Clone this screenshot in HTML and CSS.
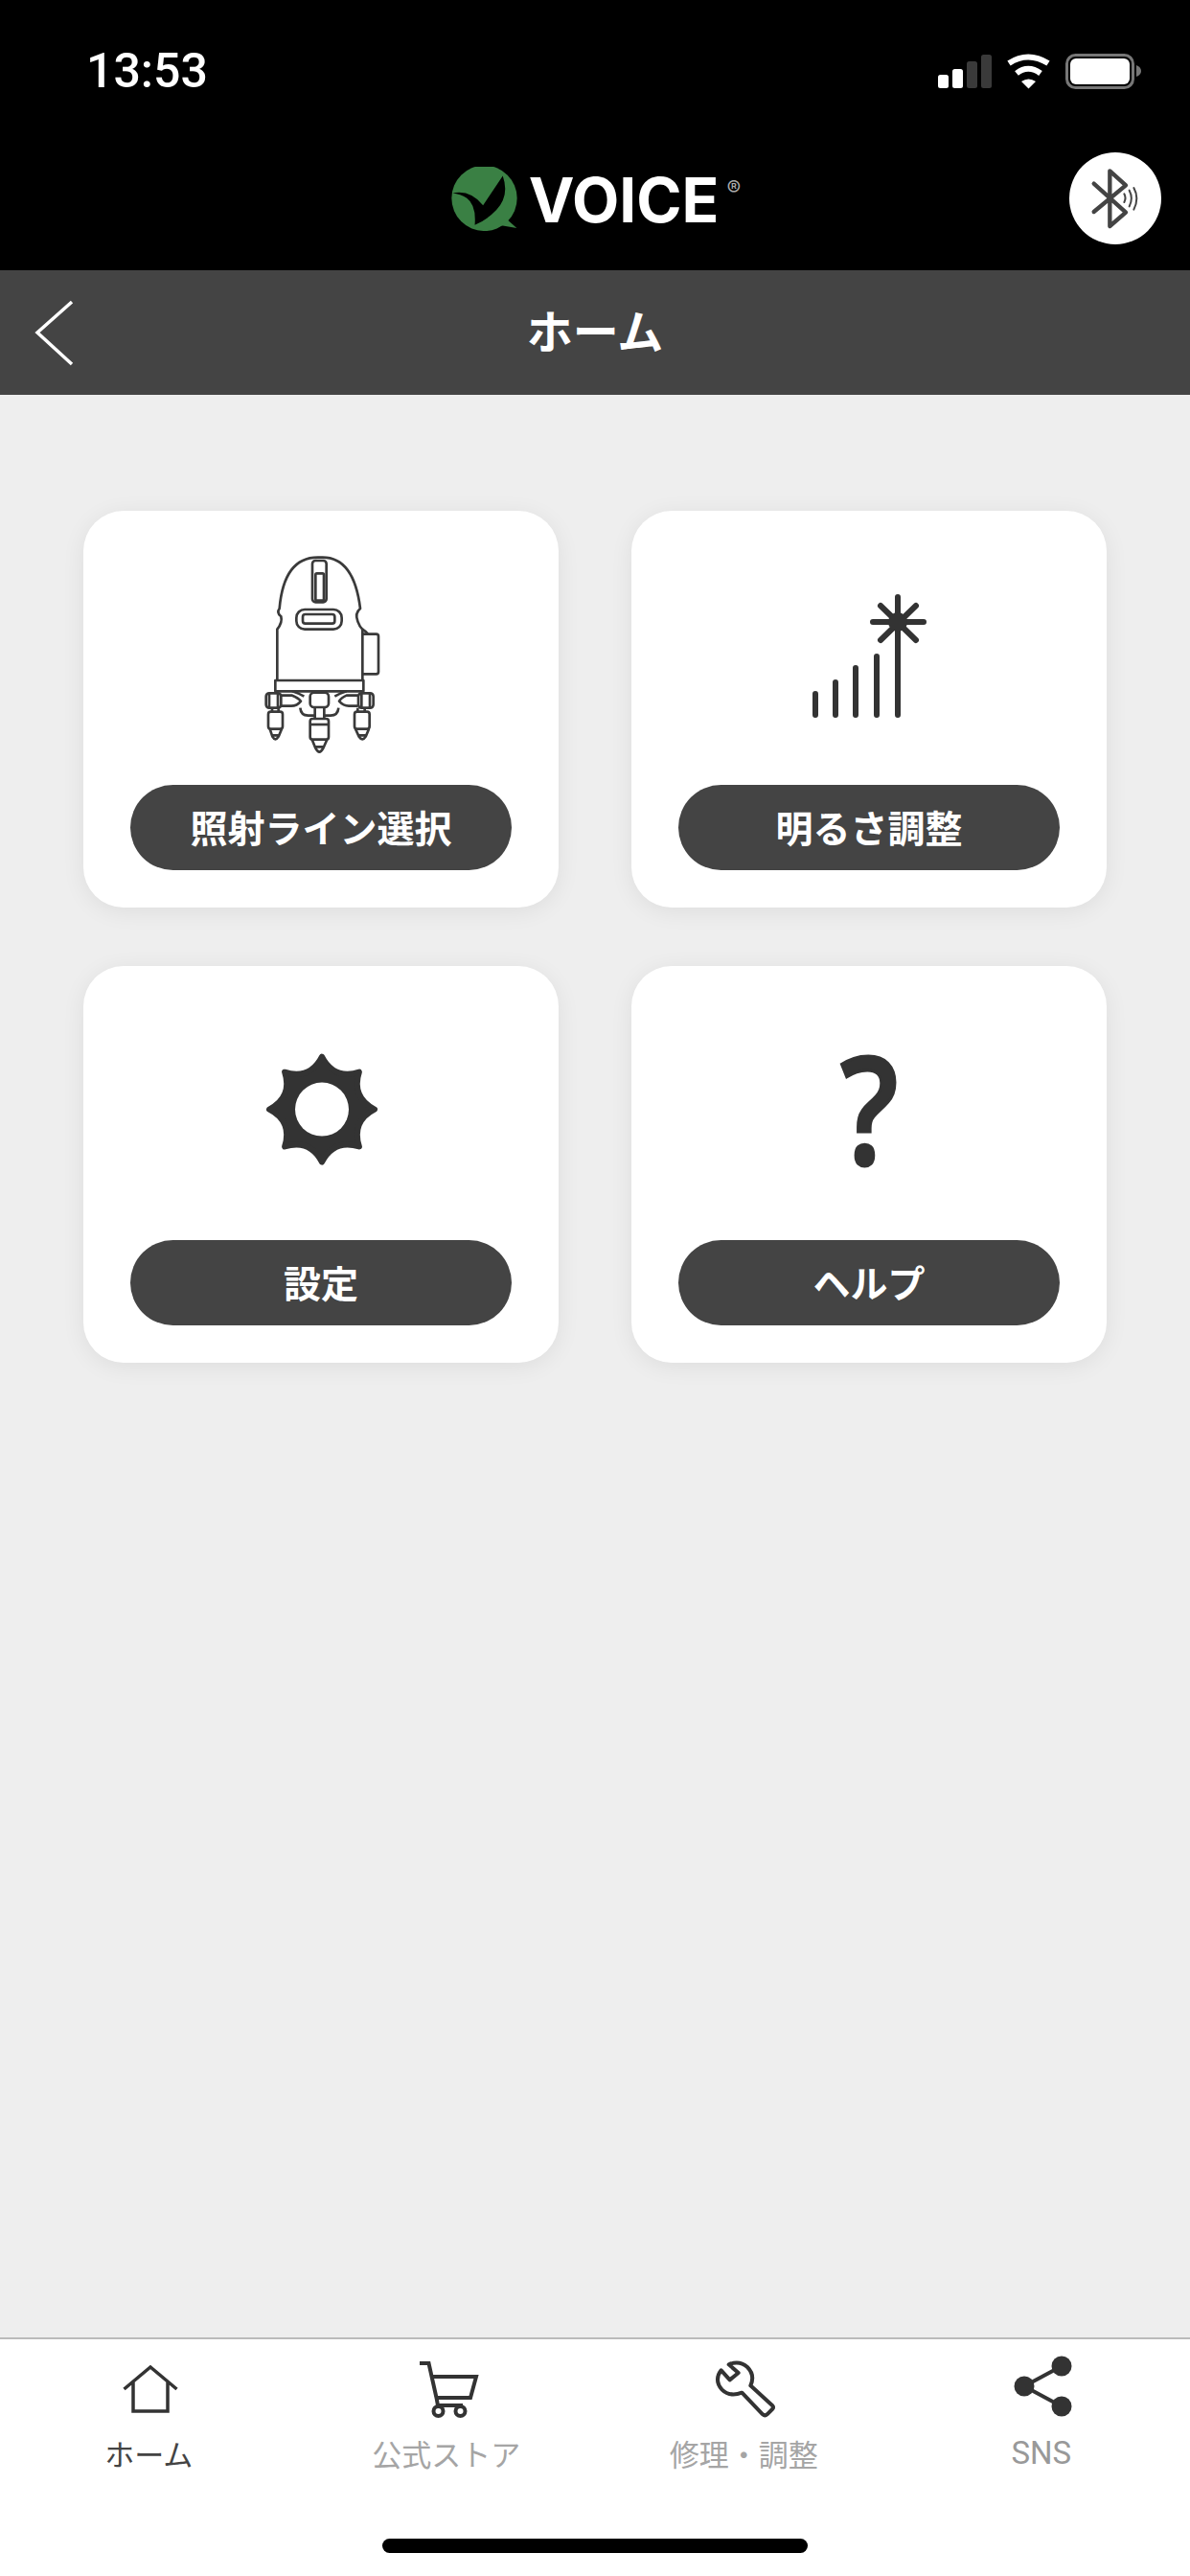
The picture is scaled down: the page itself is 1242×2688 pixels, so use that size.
FILE: index.html
```html
<!DOCTYPE html>
<html lang="ja">
<head>
    <meta charset="UTF-8">
    <meta name="viewport" content="width=device-width, initial-scale=1.0">
    <link rel="stylesheet" href="styles.css">
    <title>ホーム</title>
</head>
<body>
    <header class="top">
        <div class="status-bar">
            <span class="time">13:53</span>
            <svg class="status-icons" width="212" height="48" viewBox="979 50 212 48">
                <rect x="979" y="78" width="11" height="14" rx="2.5" fill="#fff"/>
                <rect x="994" y="72" width="11" height="20" rx="2.5" fill="#fff"/>
                <rect x="1009" y="64" width="11" height="28" rx="2.5" fill="#3a3a3a"/>
                <rect x="1024" y="57" width="11" height="35" rx="2.5" fill="#3a3a3a"/>
                <path d="M1053 66 Q1073 53 1094 66" fill="none" stroke="#fff" stroke-width="6"/>
                <path d="M1061 76.5 Q1073 67 1086 76.5" fill="none" stroke="#fff" stroke-width="6"/>
                <path d="M1066 85 Q1073.5 80 1081 85 L1073.5 92.5 Z" fill="#fff"/>
                <rect x="1113.5" y="57.5" width="69" height="34" rx="9" fill="none" stroke="#777" stroke-width="3"/>
                <rect x="1117" y="61" width="62" height="27" rx="6" fill="#fff"/>
                <path d="M1186 68 Q1191 70 1191 74 Q1191 78 1186 80 Z" fill="#777"/>
            </svg>
        </div>
        <div class="app-bar">
            <div class="logo">
                <svg width="73" height="67" viewBox="150 70 220 200">
                    <circle cx="260" cy="168" r="103" fill="#3a8044"/>
                    <path d="M328 232 L362 262 L305 252 Z" fill="#3a8044"/>
                    <path d="M160 152 Q215 140 256 190 L318 98 Q340 160 298 205 Q270 235 230 252 Q235 190 205 168 Q185 155 160 152 Z" fill="#000"/>
                </svg>
                <span class="logo-name">VOICE</span>
                <span class="logo-mark">®</span>
            </div>
            <button class="bt-button">
                <svg width="96" height="96" viewBox="108 57 288 288">
                    <path d="M185 155 L285 245 L235 288 V115 L285 160 L185 243" fill="none" stroke="#444" stroke-width="13" stroke-linecap="round" stroke-linejoin="round"/>
                    <path d="M280 187 Q287 200 280 213 M296 176 Q309 200 296 226 M310 168 Q328 200 310 236" fill="none" stroke="#444" stroke-width="6" stroke-linecap="round"/>
                </svg>
            </button>
        </div>
    </header>

    <nav class="nav-bar">
        <svg class="back" width="48" height="72" viewBox="0 0 48 72">
            <path d="M42 4 L6 36 L42 69" fill="none" stroke="#fff" stroke-width="3.5"/>
        </svg>
        <h1 class="nav-title">ホーム</h1>
    </nav>

    <main class="menu">
        <div class="card">
            <div class="card-icon">
                <svg width="200" height="240" viewBox="15 0 600 720">
                    <g fill="none" stroke="#3a3a3a" stroke-width="8" stroke-linejoin="round">
                        <path d="M178 450 V290 Q195 268 190 250 Q175 238 185 225 C195 110 240 65 305 65 H320 C385 65 425 120 438 225 Q420 240 430 265 Q436 282 445 290 V450"/>
                        <path d="M445 290 Q455 296 462 305"/>
                        <path d="M445 305 H488 Q495 305 495 312 V423 Q495 430 488 430 H445"/>
                        <rect x="172" y="450" width="276" height="34"/>
                        <rect x="288" y="75" width="44" height="130" rx="10"/>
                        <rect x="298" y="115" width="26" height="85" rx="4"/>
                        <rect x="238" y="228" width="142" height="62" rx="26"/>
                        <rect x="258" y="243" width="100" height="29" rx="8"/>
                        <rect x="143" y="490" width="47" height="46" rx="10"/>
                        <path d="M153 490 V536 M180 490 V536"/>
                        <path d="M162 536 V548 M182 536 V548"/>
                        <rect x="150" y="548" width="45" height="54" rx="8"/>
                        <path d="M155 602 L163 626 Q172 642 182 626 L192 602 M163 622 H182"/>
                        <rect x="432" y="490" width="47" height="46" rx="10"/>
                        <path d="M442 490 V536 M468 490 V536"/>
                        <path d="M430 536 V548 M452 536 V548"/>
                        <rect x="420" y="548" width="47" height="54" rx="8"/>
                        <path d="M423 602 L434 626 Q445 642 455 626 L465 602 M434 622 H456"/>
                        <rect x="281" y="488" width="58" height="46" rx="12"/>
                        <path d="M296 534 V570 M325 534 V570"/>
                        <rect x="281" y="570" width="58" height="65" rx="8"/>
                        <path d="M281 588 H339"/>
                        <path d="M287 635 L298 662 Q310 686 322 662 L334 635 M298 658 H322"/>
                        <path d="M190 497 H225 Q245 505 252 515 Q240 530 222 530 H190"/>
                        <path d="M430 497 H395 Q378 505 372 515 Q385 530 402 530 H430"/>
                        <path d="M250 536 Q252 560 275 560 H296 M370 536 Q368 560 345 560 H325"/>
                        <path d="M225 484 Q245 490 262 500 M395 484 Q375 490 358 500"/>
                    </g>
                </svg>
            </div>
            <a class="pill">照射ライン選択</a>
        </div>
        <div class="card">
            <div class="card-icon">
                <svg width="200" height="240" viewBox="0 0 200 240">
                    <g fill="none" stroke="#333" stroke-width="6" stroke-linecap="round">
                        <path d="M44 164 V186 M65 152 V186 M86 137 V186 M108 125 V186 M130 63 V186"/>
                        <path d="M104 89 H157 M112 72 L149 108 M149 72 L112 108"/>
                    </g>
                    <circle cx="130" cy="89" r="10" fill="#333"/>
                </svg>
            </div>
            <a class="pill">明るさ調整</a>
        </div>
        <div class="card">
            <div class="card-icon">
                <svg width="200" height="240" viewBox="0 0 200 240">
                    <path d="M101 67.6 Q113.6 92.1 139.9 83.7 Q131.5 110 156 122.6 Q131.5 135.2 139.9 161.5 Q113.6 153.1 101 177.6 Q88.4 153.1 62.1 161.5 Q70.5 135.2 46 122.6 Q70.5 110 62.1 83.7 Q88.4 92.1 101 67.6 Z" fill="#333" stroke="#333" stroke-width="6" stroke-linejoin="round"/>
                    <circle cx="101" cy="122.6" r="28" fill="#fff"/>
                </svg>
            </div>
            <a class="pill">設定</a>
        </div>
        <div class="card">
            <div class="card-icon">
                <span class="question">?</span>
            </div>
            <a class="pill">ヘルプ</a>
        </div>
    </main>

    <footer class="tab-bar">
        <div class="tabs">
            <a class="tab active">
                <svg width="80" height="80" viewBox="0 0 80 80">
                    <path d="M14.5 41 L42 18 L69.5 41 M24 33 V64 H60 V33" fill="none" stroke="#333" stroke-width="3.5"/>
                </svg>
                <span>ホーム</span>
            </a>
            <a class="tab">
                <svg width="80" height="80" viewBox="0 0 80 80">
                    <g fill="none" stroke="#333" stroke-width="4">
                        <path d="M12 14 H21.5 L29.5 50 L31 58 H57"/>
                        <path d="M25.5 28 H71 L65 50 H29.5"/>
                        <circle cx="31.5" cy="64" r="5"/>
                        <circle cx="54.5" cy="64" r="5"/>
                    </g>
                </svg>
                <span>公式ストア</span>
            </a>
            <a class="tab">
                <svg width="80" height="80" viewBox="18 6 240 240">
                    <path d="M68 70 L95 100 L122 78 L92 52 Q125 38 150 60 Q175 85 160 118 L228 180 Q234 186 228 192 L212 208 Q205 214 198 208 L133 140 Q95 155 70 130 Q45 100 68 70 Z" fill="none" stroke="#333" stroke-width="12" stroke-linejoin="round"/>
                </svg>
                <span>修理・調整</span>
            </a>
            <a class="tab tab-latin">
                <svg width="80" height="80" viewBox="0 0 80 80">
                    <path d="M61 17 L22 38 L61 59" fill="none" stroke="#333" stroke-width="4"/>
                    <circle cx="61" cy="17" r="10.5" fill="#333"/>
                    <circle cx="22" cy="38" r="10.5" fill="#333"/>
                    <circle cx="61" cy="59" r="10.5" fill="#333"/>
                </svg>
                <span>SNS</span>
            </a>
        </div>
        <div class="home-indicator"></div>
    </footer>
</body>
</html>
```

FILE: styles.css
```css
* {
    box-sizing: border-box;
}

body {
    margin: 0;
    width: 1242px;
    height: 2688px;
    display: flex;
    flex-direction: column;
    background: #eeeeee;
    font-family: "Noto Sans CJK JP", "Noto Sans", sans-serif;
}

.top {
    background: #000;
    height: 282px;
    flex: none;
    padding-top: 50px;
}

.status-bar {
    display: flex;
    justify-content: space-between;
    align-items: center;
    height: 48px;
    padding: 0 51px 0 90px;
}

.time {
    color: #fff;
    font-family: Roboto, sans-serif;
    font-size: 50px;
    font-weight: 500;
    line-height: 48px;
}

.status-icons {
    display: block;
}

.app-bar {
    display: grid;
    grid-template-columns: 1fr auto 1fr;
    align-items: center;
    margin-top: 61px;
    padding: 0 30px;
}

.logo {
    grid-column: 2;
    display: flex;
    align-items: center;
    gap: 10px;
}

.logo svg {
    display: block;
}

.logo-name {
    color: #fff;
    font-family: Inter, sans-serif;
    font-size: 64px;
    font-weight: 700;
    line-height: 64px;
    margin-top: 4px;
}

.logo-mark {
    color: #aaa;
    font-family: Inter, sans-serif;
    font-size: 22px;
    line-height: 22px;
    align-self: flex-start;
    margin: 12px 0 0 -2px;
}

.bt-button {
    grid-column: 3;
    justify-self: end;
    width: 96px;
    height: 96px;
    padding: 0;
    border: 0;
    border-radius: 50%;
    background: #fff;
}

.bt-button svg {
    display: block;
}

.nav-bar {
    flex: none;
    height: 130px;
    background: #444;
    display: grid;
    grid-template-columns: 1fr auto 1fr;
    align-items: center;
    padding-left: 33px;
}

.back {
    display: block;
    margin-top: -1px;
}

.nav-title {
    margin: -8px 33px 0 0;
    color: #fff;
    font-size: 48px;
    font-weight: 700;
    line-height: 60px;
}

.menu {
    flex: 1;
    display: grid;
    grid-template-columns: 496px 496px;
    grid-auto-rows: 414px;
    column-gap: 76px;
    row-gap: 61px;
    align-content: start;
    padding: 121px 87px 0;
}

.card {
    background: #fff;
    border-radius: 42px;
    box-shadow: 0 4px 24px rgba(0, 0, 0, 0.07);
    padding: 27px 49px 39px;
    display: flex;
    flex-direction: column;
    gap: 19px;
}

.card-icon {
    height: 240px;
    display: flex;
    justify-content: center;
    align-items: center;
}

.card-icon svg {
    display: block;
}

.question {
    color: #333;
    font-family: "Open Sans", sans-serif;
    font-size: 155px;
    font-weight: 600;
    line-height: 236px;
    -webkit-text-stroke: 3px #333;
    transform: scaleX(0.86);
}

.pill {
    height: 89px;
    border-radius: 45px;
    background: #444;
    color: #fff;
    font-size: 39px;
    font-weight: 700;
    padding-bottom: 3px;
    display: flex;
    justify-content: center;
    align-items: center;
}

.tab-bar {
    flex: none;
    height: 249px;
    background: #fff;
    border-top: 2px solid #bbb;
    padding-top: 11px;
    display: flex;
    flex-direction: column;
}

.tabs {
    display: grid;
    grid-template-columns: repeat(4, 1fr);
}

.tab {
    display: flex;
    flex-direction: column;
    align-items: center;
    gap: 8px;
    color: #a5a5a5;
    font-size: 31px;
    line-height: 40px;
}

.tab svg {
    display: block;
}

.tab.active {
    color: #444;
}

.tab-latin {
    font-family: Roboto, sans-serif;
    font-size: 33px;
    color: #999;
}

.home-indicator {
    width: 444px;
    height: 15px;
    margin: auto auto 24px;
    border-radius: 8px;
    background: #000;
}
```
